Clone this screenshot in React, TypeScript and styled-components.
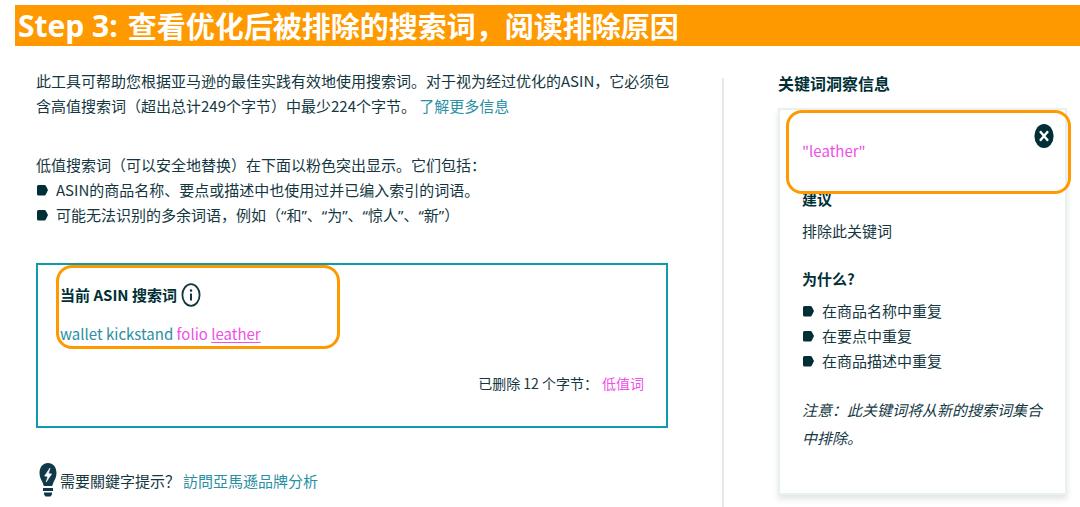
import React from "react";
import styled, { createGlobalStyle, css } from "styled-components";

const ink = "#14373f";
const dark = "#002f36";
const teal = "#2a8fa3";
const pink = "#f04fe8";
const orange = "#ff9900";

const GlobalStyle = createGlobalStyle`
  * { box-sizing: border-box; }
  body {
    margin: 0;
    background: #fff;
    color: ${ink};
    font-family: "Noto Sans CJK SC", "Noto Sans", sans-serif;
    font-size: 15px;
    line-height: 25px;
  }
  h1, h2, h3, p, ul { margin: 0; padding: 0; }
`;

const Banner = styled.header`
  margin: 5px 0 0 15px;
  padding: 0 3px;
  background: ${orange};
`;

const BannerTitle = styled.h1`
  display: flex;
  gap: 10px;
  color: #fff;
  font: bold 29px/41px "Noto Sans CJK SC", sans-serif;
`;

const StepLabel = styled.span`
  font-family: "Open Sans", sans-serif;
  font-size: 30px;
`;

const Layout = styled.div`
  display: grid;
  grid-template-columns: minmax(0, 1fr) 358px;
  padding-top: 22px;
`;

const Main = styled.main`
  padding: 0 36px;
`;

const Paragraph = styled.p`
  margin-bottom: 34px;
`;

const Quote = styled.span`
  font-family: "Noto Sans", "Noto Sans CJK SC", sans-serif;
`;

const Link = styled.a<{ $pink?: boolean }>`
  color: ${(p) => (p.$pink ? pink : teal)};
  text-decoration: ${(p) => (p.$pink ? "underline" : "none")};
  text-underline-offset: 2px;
`;

const BulletList = styled.ul`
  list-style: none;
`;

const BulletItem = styled.li`
  display: flex;
  align-items: center;
  gap: 8px;
  padding-left: 1px;
`;

const BulletIcon = styled.svg`
  flex: none;
  width: 11px;
  height: 12px;
`;

const TermsBox = styled.section`
  position: relative;
  margin: 35px 18px 0 0;
  padding: 17px 22px 30px;
  border: 2px solid #0f9bae;
`;

const outline = css`
  position: absolute;
  border: 3px solid ${orange};
  border-radius: 16px;
  pointer-events: none;
`;

const TermsHighlight = styled.div`
  ${outline}
  top: 0;
  left: 18px;
  width: 284px;
  height: 84px;
`;

const BoxTitle = styled.h2`
  display: flex;
  align-items: center;
  gap: 4px;
  color: ${dark};
  font-size: 15px;
  line-height: 25px;
`;

const OvalIcon = styled.svg`
  display: block;
  width: 20px;
  height: 24px;
`;

const Terms = styled.p`
  margin-top: 14px;
  color: ${teal};
`;

const Pink = styled.span`
  color: ${pink};
`;

const Removed = styled.p`
  display: flex;
  justify-content: flex-end;
  gap: 4px;
  margin-top: 25px;
  font-size: 14px;
`;

const Tip = styled.p`
  display: flex;
  align-items: center;
  gap: 3px;
  margin-top: 35px;
  padding-left: 3px;
`;

const BulbIcon = styled.svg`
  flex: none;
  width: 18px;
  height: 34px;
`;

const Sidebar = styled.aside`
  margin-top: 10px;
  padding: 0 13px 12px 54px;
  border-left: 2px solid #e6e9e9;
`;

const SidebarTitle = styled.h2`
  margin-top: -7px;
  color: ${dark};
  font-size: 16px;
  line-height: 25px;
`;

const Card = styled.section`
  position: relative;
  margin-top: 12px;
  padding: 14px 22px 41px;
  border: 2px solid #e9f0f0;
  box-shadow: 0 4px 6px rgba(0, 40, 40, 0.12);
`;

const CardHighlight = styled.div`
  ${outline}
  top: 0;
  left: 6px;
  right: -6px;
  height: 84px;
`;

const CardHead = styled.div`
  display: flex;
  justify-content: space-between;
  align-items: flex-start;
  margin-right: -11px;
`;

const Keyword = styled.p`
  padding-top: 14px;
  color: ${pink};
`;

const CloseButton = styled.button`
  padding: 0;
  border: 0;
  background: none;
  cursor: pointer;
`;

const CardTitle = styled.h3`
  margin-top: 23px;
  color: ${dark};
  font-size: 15px;
  line-height: 25px;
`;

const Advice = styled.p`
  margin-top: 7px;
`;

const Reasons = styled(BulletList)`
  margin-top: 7px;
`;

const Note = styled.p`
  margin: 23px -8px 0 0;
  font-style: italic;
  line-height: 28px;
`;

const Bullet = ({ children }: { children: React.ReactNode }) => (
  <BulletItem>
    <BulletIcon viewBox="0 0 11 12" aria-hidden="true">
      <path d="M1.5 1H7.5Q8.3 1 8.8 1.8L11 6L8.8 10.4Q8.3 11.5 7.5 11.5H1.5Q0 11.5 0 10V2.5Q0 1 1.5 1Z" fill={dark} />
    </BulletIcon>
    <span>{children}</span>
  </BulletItem>
);

export default function App() {
  return (
    <>
      <GlobalStyle />
      <Banner>
        <BannerTitle>
          <StepLabel>Step 3:</StepLabel>
          <span>查看优化后被排除的搜索词，阅读排除原因</span>
        </BannerTitle>
      </Banner>
      <Layout>
        <Main>
          <Paragraph>
            此工具可帮助您根据亚马逊的最佳实践有效地使用搜索词。对于视为经过优化的ASIN，它必须包
            <br />
            含高值搜索词（超出总计249个字节）中最少224个字节。{" "}
            <Link href="#more">了解更多信息</Link>
          </Paragraph>
          <p>低值搜索词（可以安全地替换）在下面以粉色突出显示。它们包括：</p>
          <BulletList>
            <Bullet>ASIN的商品名称、要点或描述中也使用过并已编入索引的词语。</Bullet>
            <Bullet>
              可能无法识别的多余词语，例如（<Quote>“和”</Quote>、<Quote>“为”</Quote>、
              <Quote>“惊人”</Quote>、<Quote>“新”</Quote>）
            </Bullet>
          </BulletList>
          <TermsBox>
            <BoxTitle>
              当前 ASIN 搜索词
              <OvalIcon viewBox="0 0 20 24" role="img" aria-label="信息">
                <ellipse cx="10" cy="12" rx="8.6" ry="10.8" fill="none" stroke={ink} strokeWidth="1.8" />
                <ellipse cx="10" cy="7.6" rx="1.2" ry="1.4" fill={ink} />
                <path d="M10 10.5V17.5" stroke={ink} strokeWidth="2" />
              </OvalIcon>
            </BoxTitle>
            <Terms>
              wallet kickstand <Pink>folio</Pink>{" "}
              <Link $pink href="#leather">leather</Link>
            </Terms>
            <Removed>
              <span>已删除 12 个字节：</span>
              <Pink>低值词</Pink>
            </Removed>
            <TermsHighlight />
          </TermsBox>
          <Tip>
            <BulbIcon viewBox="0 0 18 34" aria-hidden="true">
              <path d="M9 0C3.8 0 .5 4.3 .5 10C.5 14.5 2.4 16.8 3.6 19.5C4.2 21 4.3 23 5.4 23H12.6C13.7 23 13.8 21 14.4 19.5C15.6 16.8 17.5 14.5 17.5 10C17.5 4.3 14.2 0 9 0Z" fill="#12394a" />
              <path d="M11 5L5.6 13L8.8 13.4L7.2 19L12.6 11L9.4 10.6Z" fill="#fff" stroke="#fff" strokeWidth=".6" />
              <path d="M4 25H14V28H4ZM5 29.5H13V31.5L11.5 33.5H6.5L5 31.5Z" fill="#12394a" />
            </BulbIcon>
            <span>需要關鍵字提示？</span>
            <Link href="#analytics">訪問亞馬遜品牌分析</Link>
          </Tip>
        </Main>
        <Sidebar>
          <SidebarTitle>关键词洞察信息</SidebarTitle>
          <Card>
            <CardHead>
              <Keyword>"leather"</Keyword>
              <CloseButton type="button" aria-label="关闭">
                <OvalIcon viewBox="0 0 20 24" aria-hidden="true">
                  <ellipse cx="10" cy="12" rx="9.6" ry="12" fill={dark} />
                  <path d="M6 7.2L14 16.8M14 7.2L6 16.8" stroke="#fff" strokeWidth="2.4" />
                </OvalIcon>
              </CloseButton>
            </CardHead>
            <CardTitle>建议</CardTitle>
            <Advice>排除此关键词</Advice>
            <CardTitle>为什么?</CardTitle>
            <Reasons>
              <Bullet>在商品名称中重复</Bullet>
              <Bullet>在要点中重复</Bullet>
              <Bullet>在商品描述中重复</Bullet>
            </Reasons>
            <Note>注意：此关键词将从新的搜索词集合中排除。</Note>
            <CardHighlight />
          </Card>
        </Sidebar>
      </Layout>
    </>
  );
}
